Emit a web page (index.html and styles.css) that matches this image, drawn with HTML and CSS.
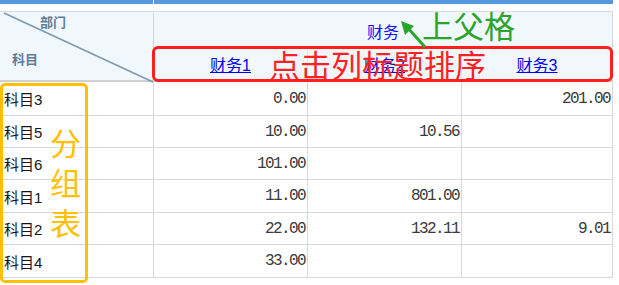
FILE: index.html
```html
<!DOCTYPE html>
<html lang="zh-CN">
<head>
<meta charset="utf-8">
<title>分组表</title>
<link rel="stylesheet" href="styles.css">
</head>
<body>
<div class="sheet">
  <div class="topbar">
    <div class="tb tb-left"></div>
    <div class="tb tb-right"></div>
  </div>
  <div class="grid">
    <div class="corner">
      <svg class="diag" width="154" height="71" viewBox="0 0 154 71"><line x1="4" y1="1" x2="153" y2="70" stroke="#7d98ad" stroke-width="1.4"/></svg>
      <span class="c-dept">部门</span>
      <span class="c-subj">科目</span>
    </div>
    <div class="grp">财务</div>
    <div class="hcell"><a href="#">财务1</a></div>
    <div class="hcell"><a href="#">财务2</a></div>
    <div class="hcell last"><a href="#">财务3</a></div>

    <div class="cell name">科目3</div><div class="cell num">0.00</div><div class="cell num"></div><div class="cell num last">201.00</div>
    <div class="cell name">科目5</div><div class="cell num">10.00</div><div class="cell num">10.56</div><div class="cell num last"></div>
    <div class="cell name">科目6</div><div class="cell num">101.00</div><div class="cell num"></div><div class="cell num last"></div>
    <div class="cell name">科目1</div><div class="cell num">11.00</div><div class="cell num">801.00</div><div class="cell num last"></div>
    <div class="cell name">科目2</div><div class="cell num">22.00</div><div class="cell num">132.11</div><div class="cell num last">9.01</div>
    <div class="cell name">科目4</div><div class="cell num">33.00</div><div class="cell num"></div><div class="cell num last"></div>
  </div>

  <div class="note-box red-box"></div>
  <div class="note red-note">点击列标题排序</div>
  <div class="note green-note">上父格</div>
  <svg class="arrow" width="40" height="40" viewBox="0 0 40 40">
    <line x1="26" y1="27" x2="8" y2="7" stroke="#2aa52a" stroke-width="3"/>
    <polygon points="2,1 15,6 6,15" fill="#2aa52a"/>
  </svg>
  <div class="note-box orange-box"></div>
  <div class="note orange-note">分<br>组<br>表</div>
</div>
</body>
</html>
```

FILE: styles.css
```css
html, body {
  margin: 0;
  padding: 0;
  background: #ffffff;
}

.sheet {
  position: relative;
  width: 619px;
  height: 285px;
  font-family: "Liberation Sans", "Noto Sans CJK SC", sans-serif;
}

.topbar {
  display: flex;
  gap: 1px;
  width: 613px;
  height: 4px;
}

.tb {
  background: #5899de;
  height: 4px;
}

.tb-left { width: 153px; }
.tb-right { flex: 1; }

.grid {
  margin-top: 7px;
  display: grid;
  grid-template-columns: 154px 154px 154px 151px;
  grid-template-rows: 36px 35px 34px 32px 32px 33px 32px 33px;
}

.corner {
  position: relative;
  grid-row: 1 / 3;
  grid-column: 1;
  background: #f0f7fd;
  border-top: 1px solid #d6dde3;
  border-right: 1px solid #d6d6d6;
  border-bottom: 2px solid #d0d0d0;
  box-sizing: border-box;
}

.diag {
  position: absolute;
  left: 0;
  top: 0;
}

.c-dept, .c-subj {
  position: absolute;
  font-family: "Noto Sans CJK SC", sans-serif;
  font-size: 13px;
  font-weight: bold;
  line-height: 13px;
  color: #5f7d92;
}

.c-dept { left: 40px; top: 3px; }
.c-subj { left: 12px; top: 40px; }

.grp {
  grid-column: 2 / 5;
  grid-row: 1;
  background: #f0f7fd;
  border-top: 1px solid #d6dde3;
  border-right: 1px solid #d6d6d6;
  box-sizing: border-box;
  display: flex;
  align-items: center;
  justify-content: center;
  padding-top: 2px;
  font-family: "Noto Sans CJK SC", sans-serif;
  font-size: 16px;
  color: #1010f0;
}

.hcell {
  background: #f0f7fd;
  border-right: 1px solid #e2e6ea;
  border-bottom: 2px solid #d0d0d0;
  box-sizing: border-box;
  display: flex;
  align-items: center;
  justify-content: center;
  padding-top: 1px;
  font-size: 16px;
}

.hcell.last { border-right-color: #d6d6d6; }

.hcell a {
  color: #0000ee;
  text-decoration: underline;
}

.cell {
  border-right: 1px solid #d8d8d8;
  border-bottom: 1px solid #d8d8d8;
  box-sizing: border-box;
  display: flex;
  align-items: center;
}

.name {
  padding-left: 4px;
  font-size: 15px;
  color: #151515;
}

.num {
  justify-content: flex-end;
  padding-right: 2px;
  font-family: "Liberation Mono", monospace;
  font-size: 16px;
  letter-spacing: -1.6px;
  color: #3a3a3a;
}

.note-box {
  position: absolute;
  box-sizing: border-box;
}

.red-box {
  left: 152px;
  top: 46px;
  width: 461px;
  height: 36px;
  border: 3px solid #ff1f1f;
  border-radius: 6px;
}

.note {
  position: absolute;
  font-family: "Noto Sans CJK SC", sans-serif;
  font-size: 31px;
  line-height: 31px;
}

.red-note {
  left: 269px;
  top: 48px;
  color: #ff2222;
}

.green-note {
  left: 422px;
  top: 9px;
  color: #2aa52a;
}

.arrow {
  position: absolute;
  left: 399px;
  top: 20px;
}

.orange-box {
  left: 0;
  top: 83px;
  width: 88px;
  height: 200px;
  border: 3px solid #ffc000;
  border-radius: 5px;
}

.orange-note {
  left: 50px;
  top: 122px;
  line-height: 40px;
  color: #ffc000;
}
```
